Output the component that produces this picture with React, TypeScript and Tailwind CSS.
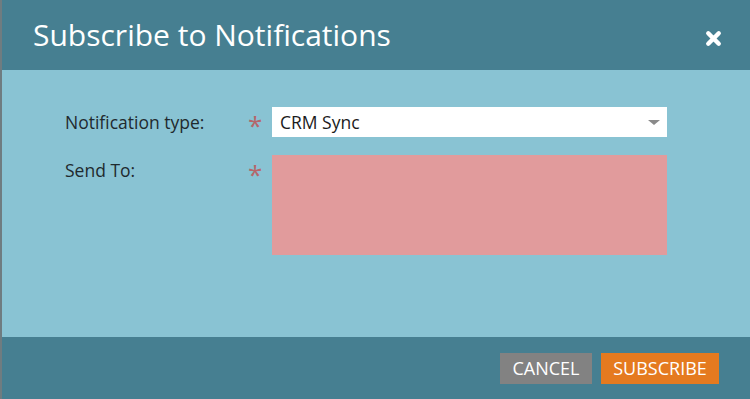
import { X } from "lucide-react";

export default function App() {
  return (
    <div
      className="flex h-[399px] w-[750px] flex-col border-l-2 border-[#6f7c80] bg-[#89c3d3]"
      style={{ fontFamily: '"Open Sans", "Liberation Sans", sans-serif' }}
    >
      <div className="flex h-[70px] items-center justify-between bg-[#467f91] pl-[31px] pr-[26px]">
        <h1 className="text-[30px] font-normal leading-none text-white">
          Subscribe to Notifications
        </h1>
        <button className="mt-[6px] text-white">
          <X className="h-[21px] w-[21px]" strokeWidth={5} />
        </button>
      </div>

      <div className="flex-1 pl-[63px] pt-[36px]">
        <div className="flex items-center">
          <label className="w-[183px] text-[17.5px] text-[#1f2a2e]">
            Notification type:
          </label>
          <span className="w-[24px] pt-[6px] text-[26px] leading-none text-[#b5666a]">*</span>
          <div className="flex h-[30px] w-[395px] items-center justify-between bg-white pl-[8px] pr-[7px]">
            <span className="text-[17.5px] text-[#1b1b1b]">CRM Sync</span>
            <span className="h-0 w-0 border-x-[6px] border-t-[5px] border-x-transparent border-t-[#8a8a8a]" />
          </div>
        </div>
        <div className="mt-[17px] flex items-start">
          <label className="w-[183px] pt-[2px] text-[17.5px] text-[#1f2a2e]">
            Send To:
          </label>
          <span className="w-[24px] pt-[6px] text-[26px] leading-none text-[#b5666a]">*</span>
          <div className="h-[100px] w-[395px] bg-[#e19b9c]" />
        </div>
      </div>

      <div className="flex h-[62px] items-start justify-end gap-[9px] bg-[#467f91] pr-[31px] pt-[16px]">
        <button className="h-[31px] w-[92px] bg-[#828282] text-[18px] text-white">
          CANCEL
        </button>
        <button className="h-[31px] w-[118px] bg-[#e57a1f] text-[18px] text-white">
          SUBSCRIBE
        </button>
      </div>
    </div>
  );
}
